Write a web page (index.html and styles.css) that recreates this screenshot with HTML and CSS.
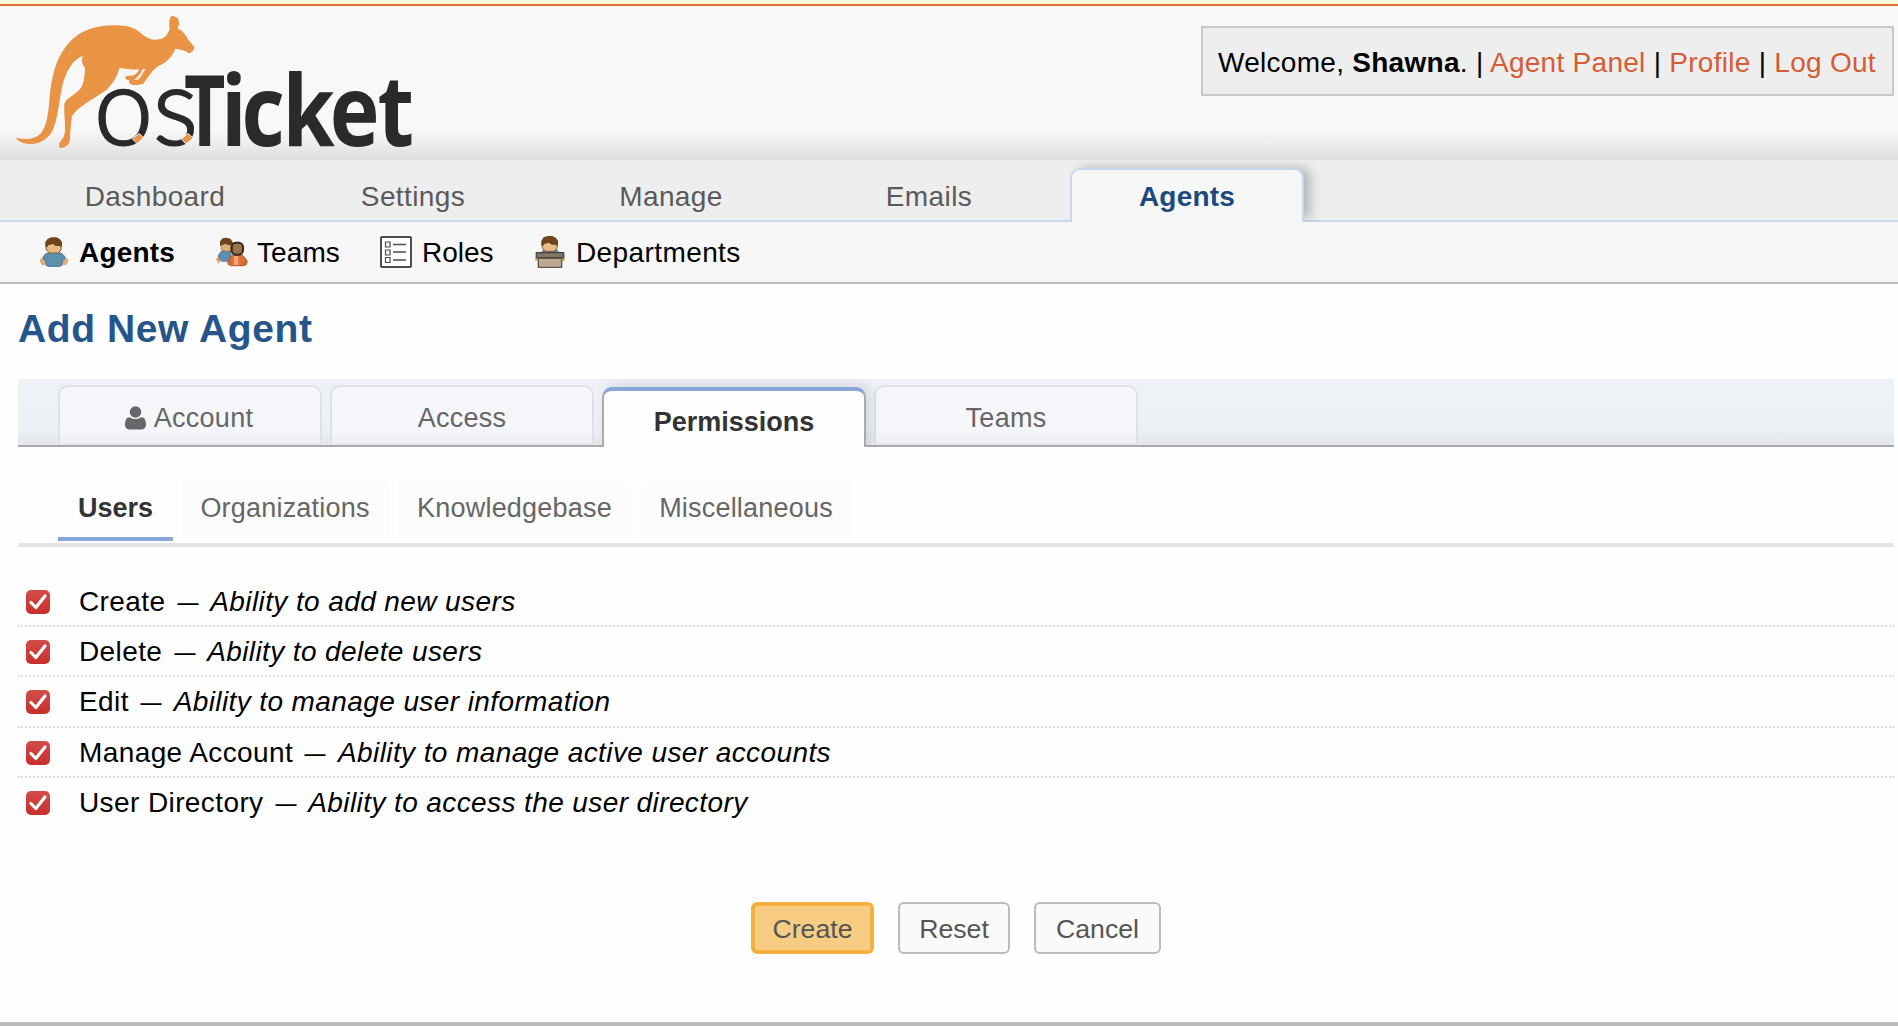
FILE: index.html
```html
<!DOCTYPE html>
<html lang="en">
<head>
<meta charset="utf-8">
<title>osTicket :: Add New Agent</title>
<link rel="stylesheet" href="styles.css">
</head>
<body>
<div class="top-strip"></div>
<header class="header">
  <svg class="logo" width="430" height="154" viewBox="0 6 430 154" role="img" aria-label="osTicket">
    <g transform="scale(.33333)">
      <path fill="#e99344" d="M48 413C75 419 105 420 124 398C142 377 146 330 150 280C158 205 178 160 207 128C240 92 285 76 345 76C380 76 400 82 417 95C434 108 445 119 465 119C490 119 502 108 509 87C506 70 508 50 516 48C520 46 523 48 524 52C530 49 536 56 537 68C537 75 535 81 533 86C550 92 556 104 566 121C575 130 582 138 583 143C583 149 579 154 575 153C574 158 570 161 566 159C557 151 542 149 526 146C518 168 500 188 473 199L457 214C447 228 437 240 430 251C415 256 396 258 388 250C387 245 387 243 389 241C380 240 374 236 376 230C380 225 392 229 402 225C410 222 415 215 418 208C398 210 379 207 359 203C352 228 338 252 318 271C280 299 235 318 216 349C212 375 211 400 209 424C205 436 196 444 182 444C176 442 175 432 180 427C190 415 195 402 195 390C196 360 190 325 194 308C203 291 233 281 244 262C253 244 254 225 255 203C246 193 243 181 249 167C216 180 199 215 188 252C178 295 176 345 160 386C147 416 118 434 89 432C69 430 52 423 48 413Z"/>
      <path fill="#f8f8f8" d="M428 208L436 207L422 231L414 239L402 240C414 232 422 222 428 208Z"/>
    </g>
    <text class="logo-os" x="94" y="144.500" textLength="104" lengthAdjust="spacingAndGlyphs">os</text>
    <text class="logo-ticket" y="146" transform="translate(184 0) scale(.73 1)">T</text>
    <text class="logo-ticket" x="43.500 67.400 115 170 225.600" y="146" transform="translate(183.500 0) scale(.86 1)">icket</text>
    <g fill="#e99344" stroke="#f0f0f0" stroke-width="1"><path d="M132.500 139L139 133.500L143.500 137.500L137 143.500Z"/><path d="M181.500 139L188 133.500L193 138L186 144Z"/></g>
  </svg>
  <p class="welcome"><span>Welcome, <b>Shawna</b>. | <a>Agent Panel</a> | <a>Profile</a> | <a>Log Out</a></span></p>
</header>
<nav class="main-nav">
  <a class="main-tab">Dashboard</a>
  <a class="main-tab">Settings</a>
  <a class="main-tab">Manage</a>
  <a class="main-tab">Emails</a>
  <a class="main-tab active">Agents</a>
</nav>
<nav class="sub-nav">
  <a class="sub-item agents active"><svg width="30" height="32" viewBox="0 0 90 96">
    <path fill="#e6b27c" stroke="#c08e5c" stroke-width="2" d="M3 72L13 63L19 84L9 86ZM87 72L77 63L71 84L81 86Z"/>
    <path fill="#5c90ad" stroke="#47748f" stroke-width="3" d="M12 68C14 54 24 49 45 49C66 49 76 54 78 68L70 74L69 88L62 91H28L21 88L20 74Z"/>
    <path fill="#e8ba84" stroke="#8a5a30" stroke-width="3" d="M22 20H66V42L57 51H32L22 42Z"/>
    <path fill="#6f431c" d="M19 34V18L26 8L38 4H52L62 9L69 18V34L63 30H50L42 24L28 28L24 34Z"/></svg><span>Agents</span></a>
  <a class="sub-item teams"><svg width="32" height="32" viewBox="0 0 96 96">
    <path fill="#d99b68" d="M0 70L8 60L15 72L8 83Z"/><path fill="#5b8fb3" stroke="#3f6a8b" stroke-width="2" d="M6 60L16 45H45V76H17Z"/>
    <path fill="#e2ae79" stroke="#8a5a30" stroke-width="2" d="M15 20H44V43L32 48L16 40Z"/><path fill="#704319" d="M12 30V16L20 7L32 5L44 9L50 18V27H36L29 23L17 28Z"/>
    <path fill="#c17646" d="M32 76L42 66V88L36 88ZM96 76L86 66V88L92 88Z"/><path fill="#e0703a" stroke="#b65426" stroke-width="3" d="M40 70L49 57H79L90 70L85 89H44Z"/><path fill="#f5a475" d="M54 60H67V87H54Z"/>
    <rect x="47" y="20" width="34" height="36" rx="13" fill="#9b7549" stroke="#332a22" stroke-width="6"/></svg><span>Teams</span></a>
  <a class="sub-item roles"><svg width="32" height="32" viewBox="0 0 32 32" fill="none" stroke="#4d4d4d"><rect x="1" y="1" width="30" height="30" rx="1" fill="#fff" stroke-width="2"/><path stroke-width="1.500" d="M13 8.500H26M13 16H26M13 24H26"/><path stroke-width="1.200" d="M5.500 6H10V11H5.500ZM5.500 14H10V19H5.500ZM5.500 21.500H10V26.500H5.500Z"/></svg><span>Roles</span></a>
  <a class="sub-item departments"><svg width="30" height="32" viewBox="0 0 90 96">
    <path fill="#4d86a8" d="M18 49L26 40H65L73 49Z"/><path fill="#e8ba84" stroke="#8a5a30" stroke-width="3" d="M22 16H66V37L57 46H32L22 37Z"/>
    <path fill="#6f431c" d="M19 30V14L26 4L38 0H52L62 5L69 14V30L63 26H50L42 20L28 24L24 30Z"/>
    <path fill="#e59b50" d="M1 65H8V74H1ZM82 65H89V74H82Z"/><path fill="#817568" stroke="#4b4640" stroke-width="4" d="M4 50H86V65H4Z"/><path fill="#bca98e" stroke="#5b554b" stroke-width="4" d="M10 67H80V94H10Z"/></svg><span>Departments</span></a>
</nav>
<main class="content">
  <h1 class="page-title">Add New Agent</h1>
  <div class="tabs">
    <a class="tab"><svg class="user-icon" width="21" height="24" viewBox="0 0 21 28" preserveAspectRatio="none"><path fill="currentColor" d="M0 22C0 17 1 13 5 13C8 16 13 16 16 13C20 13 21 17 21 22C21 25 19 27.500 17 27.500H4C2 27.500 0 25 0 22Z"/><ellipse cx="10.500" cy="7" rx="5.800" ry="6.800" fill="currentColor"/></svg><span>Account</span></a>
    <a class="tab">Access</a>
    <a class="tab active">Permissions</a>
    <a class="tab">Teams</a>
  </div>
  <div class="subtabs">
    <a class="subtab users active">Users</a>
    <a class="subtab organizations">Organizations</a>
    <a class="subtab knowledgebase">Knowledgebase</a>
    <a class="subtab miscellaneous">Miscellaneous</a>
  </div>
  <ul class="permissions">
    <li class="permission"><svg class="check" viewBox="0 0 24 24"><path d="M5 12.500L9.800 17.500L19 6"/></svg><span>Create <i class="dash">—</i> <em>Ability to add new users</em></span></li>
    <li class="permission"><svg class="check" viewBox="0 0 24 24"><path d="M5 12.500L9.800 17.500L19 6"/></svg><span>Delete <i class="dash">—</i> <em>Ability to delete users</em></span></li>
    <li class="permission"><svg class="check" viewBox="0 0 24 24"><path d="M5 12.500L9.800 17.500L19 6"/></svg><span>Edit <i class="dash">—</i> <em>Ability to manage user information</em></span></li>
    <li class="permission"><svg class="check" viewBox="0 0 24 24"><path d="M5 12.500L9.800 17.500L19 6"/></svg><span>Manage Account <i class="dash">—</i> <em>Ability to manage active user accounts</em></span></li>
    <li class="permission"><svg class="check" viewBox="0 0 24 24"><path d="M5 12.500L9.800 17.500L19 6"/></svg><span>User Directory <i class="dash">—</i> <em>Ability to access the user directory</em></span></li>
  </ul>
  <div class="actions">
    <button class="button primary">Create</button>
    <button class="button reset">Reset</button>
    <button class="button cancel">Cancel</button>
  </div>
</main>
<footer class="footer"></footer>
</body>
</html>
```
FILE: styles.css
```css
* { box-sizing: border-box; }
body {
  margin: 0;
  height: 1026px;
  overflow: hidden;
  display: flex;
  flex-direction: column;
  background: #fefefe;
  color: #000;
  font: 28px/32px "Liberation Sans", Arial, sans-serif;
  letter-spacing: .4px;
}
span { white-space: nowrap; }
.top-strip { height: 6px; background: #ffffdc; border-bottom: 2px solid #e5703a; }
.header {
  height: 154px;
  display: flex;
  justify-content: space-between;
  align-items: flex-start;
  padding-right: 4px;
  background: linear-gradient(#f8f8f8 0, #f8f8f8 122px, #ededed 138px, #dcdcdc 154px);
}
.logo { display: block; overflow: visible; letter-spacing: 0; }
.logo-os { font: 300 108px Lato, sans-serif; fill: #282a2b; stroke: #282a2b; stroke-width: 2.2px; }
.logo-ticket { font: 700 98px "Open Sans", "Noto Sans", sans-serif; fill: #282a2b; }
.welcome {
  width: 693px;
  height: 70px;
  margin: 20px 0 0;
  padding: 19px 0 0 15px;
  border: 2px solid #c8c8c8;
  background: #eee;
  letter-spacing: .28px;
}
.welcome a { color: #d65c33; }
.main-nav {
  height: 62px;
  display: flex;
  gap: 24px;
  padding: 8px 0 0 38px;
  background: #eee;
  border-bottom: 2px solid #c6d8ee;
}
.main-tab { width: 234px; height: 54px; padding-top: 13px; text-align: center; color: #5a5a5a; }
.main-tab.active {
  padding-top: 11px;
  border: 2px solid #c6d8ee;
  border-bottom: 0;
  border-radius: 10px 10px 0 0;
  background: #f7f7f7;
  color: #1c4a7e;
  font-weight: bold;
  letter-spacing: .2px;
  box-shadow: 8px -2px 12px -2px rgba(0, 0, 0, .25);
  clip-path: inset(-8px -30px 0 -10px);
}
.sub-nav {
  height: 62px;
  display: flex;
  align-items: flex-start;
  padding: 14px 0 0 39px;
  background: #f7f7f7;
  border-bottom: 2px solid #bbb;
}
.sub-item { display: flex; align-items: flex-start; gap: 10px; }
.sub-item span { padding-top: 1px; }
.sub-item.active { font-weight: bold; letter-spacing: .2px; }
.agents { width: 177px; }
.teams { width: 164px; gap: 9px; letter-spacing: .1px; }
.roles { width: 155px; letter-spacing: 0; }
.departments { gap: 11px; }
.content { flex: 1; padding: 0 4px 0 18px; }
.page-title { margin: 0; height: 95px; padding-top: 23px; font-size: 39px; line-height: 44px; letter-spacing: .6px; color: #25558a; }
.tabs {
  height: 68px;
  display: flex;
  align-items: flex-start;
  gap: 8px;
  padding: 6px 0 0 40px;
  border-bottom: 2px solid #aaa;
  background: linear-gradient(#eef2f7 0, #edf1f6 50px, #e2e6eb 66px);
  font-size: 27px;
  letter-spacing: .25px;
}
.tab {
  width: 264px;
  height: 58px;
  display: flex;
  justify-content: center;
  gap: 8px;
  padding-top: 15px;
  border: 2px solid #dfe1e4;
  border-bottom: 0;
  border-radius: 10px 10px 0 0;
  background: linear-gradient(#f5f7fb 0, #f5f6fa 42px, #eceef2 58px);
  color: #666;
}
.tab:first-child { padding-right: 2px; }
.user-icon { margin-top: 4px; color: #666769; }
.tab.active {
  height: 60px;
  margin-top: 2px;
  padding-top: 15px;
  border-color: #88a6d6 #aaa;
  border-top-width: 4px;
  background: #fefefe;
  color: #333;
  font-weight: bold;
  letter-spacing: 0;
  box-shadow: 4px -2px 12px rgba(0, 0, 0, .12);
  clip-path: inset(-8px -20px 0 -8px);
}
.subtabs {
  height: 100px;
  display: flex;
  gap: 8px;
  padding: 30px 0 0 40px;
  border-bottom: 4px solid #e4e4e4;
  font-size: 27px;
  letter-spacing: .2px;
}
.subtab { height: 60px; padding-top: 15px; text-align: center; color: #666; background: #fcfcfc; border-radius: 10px 10px 0 0; }
.subtab.active { height: 64px; background: none; border-bottom: 4px solid #88a6d6; border-radius: 0; color: #333; font-weight: bold; letter-spacing: 0; }
.users { width: 115px; }
.organizations { width: 208px; }
.knowledgebase { width: 235px; }
.miscellaneous { width: 212px; }
.permissions { list-style: none; margin: 0; padding: 30px 0 0; }
.permission { height: 50.2px; display: flex; align-items: center; gap: 29px; padding: 2px 0 0 8px; border-bottom: 2px dotted #ddd; }
.permission:last-child { border-bottom-color: transparent; }
.check { width: 24px; height: 24px; border-radius: 5px; background: linear-gradient(#d34d4b, #c72e2a); fill: none; stroke: #fff; stroke-width: 3.2; stroke-linecap: round; stroke-linejoin: round; }
.dash { display: inline-block; font-style: normal; transform: scaleX(.75); }
.actions { display: flex; gap: 24px; padding: 74px 0 0 733px; }
.button {
  height: 52px;
  padding: 2px 0 0;
  border: 2px solid #bbb;
  border-radius: 6px;
  background: #fafafa;
  color: #555;
  font: 26.67px/30px "Liberation Sans", Arial, sans-serif;
}
.primary { width: 123px; border: 4px solid #f5b140; background: #f8cd83; }
.reset { width: 112px; }
.cancel { width: 127px; }
.footer { height: 4px; background: #bbb; }
```
